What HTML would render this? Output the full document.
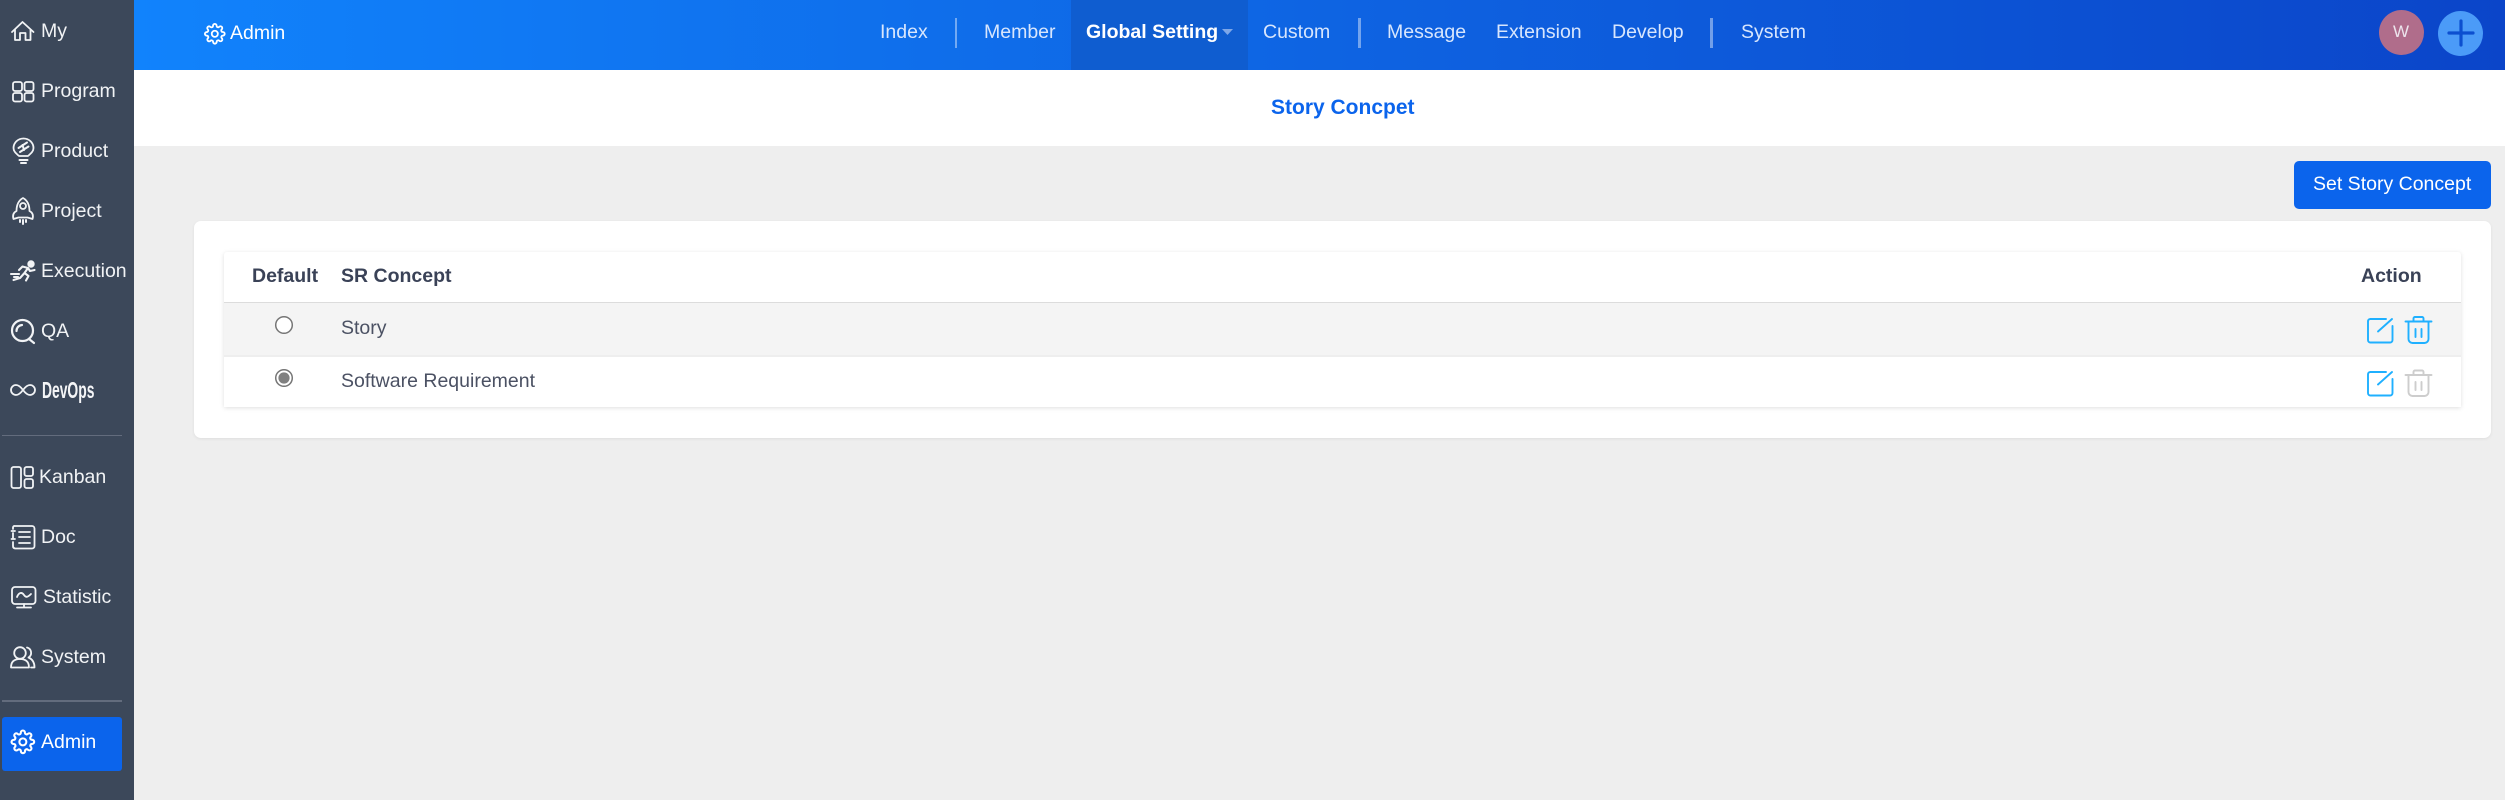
<!DOCTYPE html>
<html lang="en">
<head>
<meta charset="utf-8">
<title>Story Concept</title>
<style>
html,body{margin:0;padding:0;width:2505px;height:800px;overflow:hidden;background:#eee;font-family:"Liberation Sans",Arial,sans-serif;font-size:19.5px;}
.abs,.t{position:absolute}
.t{line-height:30px;white-space:nowrap}
#side{position:absolute;left:0;top:0;width:134px;height:800px;background:#3c485a}
.div{position:absolute;left:2px;width:120px;background:#636c7d}
#head{position:absolute;left:134px;top:0;width:2371px;height:70px;background:linear-gradient(90deg,#1183fc 0%,#0b45c9 100%)}
.n{color:#d8e6fd}
.sep{position:absolute;top:18px;width:2.5px;height:30px;background:rgba(255,255,255,.42)}
#sub{position:absolute;left:134px;top:70px;width:2371px;height:76px;background:#fff}
#card{position:absolute;left:194px;top:221px;width:2297px;height:217px;background:#fff;border-radius:7px;box-shadow:0 1px 3px rgba(0,0,0,.07)}
#tbl{position:absolute;left:224px;top:252px;width:2237px;height:155px;background:#fff;box-shadow:0 1px 5px rgba(0,0,0,.13);border-radius:3px 3px 0 0}
.th{color:#3a4257;font-weight:bold}
.td{color:#4b5163}
svg{position:absolute;left:0;top:0;overflow:visible}
</style>
</head>
<body>
<div id="side"></div>
<div class="div" style="top:435px;height:1px"></div>
<div class="div" style="top:700px;height:2px"></div>
<div class="abs" style="left:2px;top:717px;width:120px;height:54px;background:#0b64ec;border-radius:3px"></div>

<div id="head"></div>
<div class="abs" style="left:1071px;top:0;width:177px;height:70px;background:#0f5dd0"></div>
<div id="sub"></div>
<div id="card"></div>
<div id="tbl"></div>
<div class="abs" style="left:224px;top:302px;width:2237px;height:1.5px;background:#dcdcdc"></div>
<div class="abs" style="left:224px;top:303px;width:2237px;height:52px;background:#f4f4f4"></div>
<div class="abs" style="left:224px;top:355px;width:2237px;height:1.5px;background:#eee"></div>

<div id="sidetext" style="position:absolute;left:0;top:0">
<span class="t" style="left:41px;top:16px;color:#f1f3f5">My</span>
<span class="t" style="left:41px;top:76px;color:#f1f3f5">Program</span>
<span class="t" style="left:41px;top:136px;color:#f1f3f5">Product</span>
<span class="t" style="left:41px;top:196px;color:#f1f3f5">Project</span>
<span class="t" style="left:41px;top:256px;color:#f1f3f5">Execution</span>
<span class="t" style="left:41px;top:316px;color:#f1f3f5">QA</span>
<span class="t" style="left:41.5px;top:375px;color:#f4f5f7;font-size:23.5px;font-weight:bold;transform:scaleX(.59);transform-origin:0 50%">DevOps</span>
<span class="t" style="left:39px;top:462px;color:#f1f3f5">Kanban</span>
<span class="t" style="left:41px;top:522px;color:#f1f3f5">Doc</span>
<span class="t" style="left:43px;top:582px;color:#f1f3f5">Statistic</span>
<span class="t" style="left:41px;top:642px;color:#f1f3f5">System</span>
<span class="t" style="left:41px;top:727px;color:#fff">Admin</span>
</div>

<span class="t" style="left:230px;top:18px;color:#fff">Admin</span>
<span class="t n" style="left:880px;top:17px">Index</span>
<div class="sep" style="left:954.5px"></div>
<span class="t n" style="left:984px;top:17px">Member</span>
<span class="t" style="left:1086px;top:17px;color:#fff;font-weight:bold">Global Setting</span>
<span class="t n" style="left:1263px;top:17px">Custom</span>
<div class="sep" style="left:1358px"></div>
<span class="t n" style="left:1387px;top:17px">Message</span>
<span class="t n" style="left:1496px;top:17px">Extension</span>
<span class="t n" style="left:1612px;top:17px">Develop</span>
<div class="sep" style="left:1710px"></div>
<span class="t n" style="left:1741px;top:17px">System</span>

<div class="abs" style="left:2379px;top:10px;width:45px;height:45px;border-radius:50%;background:#b06d8b"></div>
<span class="t" style="left:2393px;top:17px;font-size:17px;color:#ece4ec">W</span>
<div class="abs" style="left:2438px;top:11px;width:45px;height:45px;border-radius:50%;background:#4b9bf8"></div>

<span class="t" style="left:1271px;top:93px;font-size:21px;font-weight:bold;color:#0b64ec">Story Concpet</span>

<div class="abs" style="left:2294px;top:161px;width:197px;height:48px;background:#0b64ec;border-radius:5px"></div>
<span class="t" style="left:2313px;top:169px;color:#fff">Set Story Concept</span>

<span class="t th" style="left:252px;top:261px">Default</span>
<span class="t th" style="left:341px;top:261px">SR Concept</span>
<span class="t th" style="left:2361px;top:261px">Action</span>
<span class="t td" style="left:341px;top:313px">Story</span>
<span class="t td" style="left:341px;top:366px">Software Requirement</span>

<svg width="2505" height="800" viewBox="0 0 2505 800" fill="none">
<defs>
<path id="g" d="M19.4 15a1.65 1.65 0 0 0 .33 1.82l.06.06a2 2 0 0 1 0 2.83 2 2 0 0 1-2.83 0l-.06-.06a1.65 1.65 0 0 0-1.82-.33 1.65 1.65 0 0 0-1 1.51V21a2 2 0 0 1-2 2 2 2 0 0 1-2-2v-.09A1.65 1.65 0 0 0 9 19.4a1.65 1.65 0 0 0-1.82.33l-.06.06a2 2 0 0 1-2.83 0 2 2 0 0 1 0-2.83l.06-.06a1.65 1.65 0 0 0 .33-1.82 1.65 1.65 0 0 0-1.51-1H3a2 2 0 0 1-2-2 2 2 0 0 1 2-2h.09A1.65 1.65 0 0 0 4.6 9a1.65 1.65 0 0 0-.33-1.82l-.06-.06a2 2 0 0 1 0-2.83 2 2 0 0 1 2.83 0l.06.06a1.65 1.65 0 0 0 1.82.33H9a1.65 1.65 0 0 0 1-1.51V3a2 2 0 0 1 2-2 2 2 0 0 1 2 2v.09a1.65 1.65 0 0 0 1 1.51 1.65 1.65 0 0 0 1.82-.33l.06-.06a2 2 0 0 1 2.83 0 2 2 0 0 1 0 2.83l-.06.06a1.65 1.65 0 0 0-.33 1.82V9a1.65 1.65 0 0 0 1.51 1H21a2 2 0 0 1 2 2 2 2 0 0 1-2 2h-.09a1.65 1.65 0 0 0-1.51 1z M12 8.6a3.4 3.4 0 1 0 0 6.8 3.4 3.4 0 0 0 0-6.8z"/>
</defs>
<g stroke="#f1f3f5" stroke-width="1.8" stroke-linecap="round" stroke-linejoin="round">
<!-- My -->
<path d="M12 32 L22.5 22 L33.5 32 M15 29.5 V40 H20 V33 H25.5 V40 H30.5 V29.5"/>
<!-- Program -->
<rect x="13" y="82" width="9" height="9" rx="2"/><rect x="24.500" y="82" width="9" height="9" rx="2"/><rect x="13" y="93" width="9" height="8.500" rx="2"/><rect x="24.500" y="93" width="9" height="8.500" rx="2"/>
<!-- Product -->
<path d="M19 156 C15.500 153 13.500 151 13.500 148 A10 9.500 0 0 1 33.500 148 C33.500 151 31.500 153 28 156 Z"/>
<path d="M19.500 160 H27.500 M21 163 H26" stroke-width="2"/>
<path d="M18.500 148 L27 142.500 M20 152 L28.500 146.500 M22.500 145 L24 150" stroke-width="2"/>
<!-- Project -->
<path d="M23 198 C18.500 200.500 16.500 205 16.500 211 C13.500 212.500 12.500 215.500 13.500 219 L18.500 217.500 H27.500 L32.500 219 C33.500 215.500 32.500 212.500 29.500 211 C29.500 205 27.500 200.500 23 198 Z"/>
<circle cx="23" cy="206" r="3"/>
<path d="M20 220 V222 M23 220 V224 M26 220 V222" stroke-width="2"/>
<!-- Execution -->
<circle cx="31" cy="264" r="2.800" fill="#f1f3f5"/>
<path d="M19 270 L22.500 266.500 L28 268 L24.500 273 L28.500 276 L26 280.500 M24.500 273 L20 278 L13.500 280 M28 268 L30 271 L34.500 270 M11 274 H19 M14 277 H18" stroke-width="2.100"/>
<!-- QA -->
<circle cx="22.500" cy="330.500" r="10.500" stroke-width="2.200"/>
<path d="M16.500 331 A6 6 0 0 1 22 325 M29 339 L34 343" stroke-width="2.200"/>
<!-- DevOps -->
<path d="M23 390 C20 386 18 385 16 385 A5 5 0 0 0 16 395 C18 395 20 394 23 390 C26 386 28 385 30 385 A5 5 0 0 1 30 395 C28 395 26 394 23 390 Z"/>
<!-- Kanban -->
<rect x="11.500" y="467" width="9.500" height="21" rx="2"/><rect x="24.500" y="467" width="8.500" height="9" rx="2"/><rect x="24.500" y="479" width="8.500" height="9" rx="2"/>
<!-- Doc -->
<path d="M14 526 H32 A2.500 2.500 0 0 1 34.500 528.500 V546 A2.500 2.500 0 0 1 32 548.500 H15 A2.500 2.500 0 0 1 13 546 V542 M13 538 V533 M13 529 V528 A2 2 0 0 1 14 526 M11.500 531 H15 M11.500 539 H15 M19 532 H30 M19 537 H30 M19 543 H30"/>
<!-- Statistic -->
<rect x="12" y="587" width="23.500" height="17" rx="3"/>
<path d="M17 597 C19 592 22 592 24 595 C26 598 28 597 31 594 M24 604 V607 M17 607.500 H31"/>
<!-- System -->
<circle cx="20" cy="653" r="5.800"/>
<path d="M11 667.500 C11 661 15 659 20 659 C25 659 29 661 29 667.500 Z M27 647.500 A5.500 5.500 0 0 1 28.500 657.500 C32 659 34.500 662 34.500 667.500 H31"/>
</g>
<!-- Admin gears -->
<use href="#g" transform="translate(10.500,729.500) scale(1.030)" stroke="#fff" stroke-width="2" stroke-linejoin="round"/>
<use href="#g" transform="translate(204,23) scale(.9)" stroke="#fff" stroke-width="2" stroke-linejoin="round"/>
<!-- caret -->
<path d="M1222 29 H1233 L1227.500 35 Z" fill="#7ea7e8"/>
<!-- plus -->
<path d="M2449 33 H2473 M2461 21 V45" stroke="#0c4fd0" stroke-width="3.200" stroke-linecap="round"/>
<!-- radios -->
<circle cx="284" cy="325" r="8.300" fill="#fff" stroke="#767676" stroke-width="1.500"/>
<circle cx="284" cy="378" r="8.300" fill="#fff" stroke="#767676" stroke-width="1.500"/>
<circle cx="284" cy="378" r="5.600" fill="#808080"/>
<!-- edit and delete icons -->
<g stroke="#1fb0ff" stroke-width="1.900" stroke-linecap="round" stroke-linejoin="round">
<path d="M2386 319 H2370 A2.500 2.500 0 0 0 2368 321.500 V340 A2.500 2.500 0 0 0 2370.500 342.500 H2390 A2.500 2.500 0 0 0 2392.500 340 V326 M2378 331.500 L2392 319"/>
<path d="M2386 372 H2370 A2.500 2.500 0 0 0 2368 374.500 V393 A2.500 2.500 0 0 0 2370.500 395.500 H2390 A2.500 2.500 0 0 0 2392.500 393 V379 M2378 384.500 L2392 372"/>
<path d="M2405.500 321.500 H2431.500 M2408.500 321.500 V339 A4 4 0 0 0 2412.500 343 H2424.500 A4 4 0 0 0 2428.500 339 V321.500 M2413.500 321 V318.500 A1.500 1.500 0 0 1 2415 317 H2422 A1.500 1.500 0 0 1 2423.500 318.500 V321 M2415.500 329 V337 M2421.500 329 V337"/>
</g>
<path d="M2405.500 375 H2431.500 M2408.500 375 V392 A4 4 0 0 0 2412.500 396 H2424.500 A4 4 0 0 0 2428.500 392 V375 M2413.500 374.500 V372 A1.500 1.500 0 0 1 2415 370.500 H2422 A1.500 1.500 0 0 1 2423.500 372 V374.500 M2415.500 382 V390 M2421.500 382 V390" stroke="#cdcdcd" stroke-width="1.900" stroke-linecap="round" stroke-linejoin="round"/>
</svg>
</body>
</html>
